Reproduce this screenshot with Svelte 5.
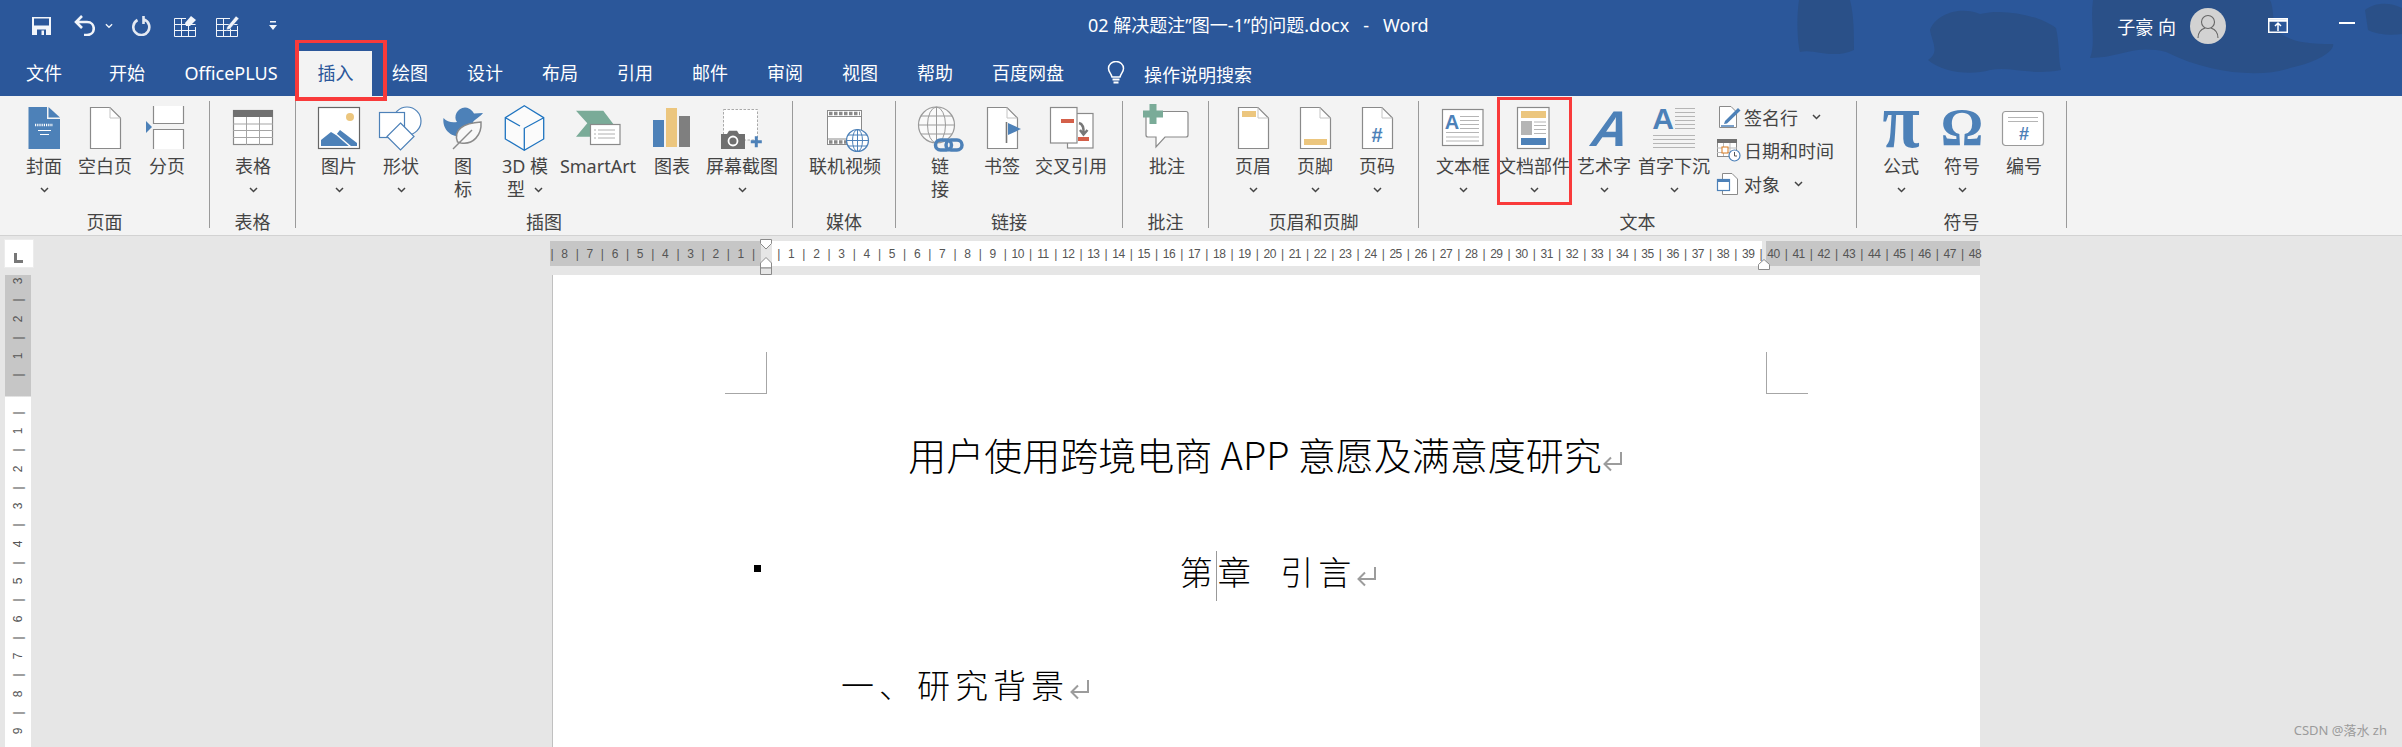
<script>
  const PG = 'M15.5 2.5H35L45.5 13V43.5H15.5Z';
  const FOLD = 'M35 2.5V13H45.5';
  const tabs = [
    ['文件', 88], ['开始', 78], ['OfficePLUS', 130], ['插入', 76, true], ['绘图', 76], ['设计', 74], ['布局', 76],
    ['引用', 74], ['邮件', 76], ['审阅', 74], ['视图', 76], ['帮助', 74], ['百度网盘', 112]
  ].map(([t, w, on]) => ({ t, w, on }));

  const groups = [
    { label: '页面', w: 210, pad: 14, tools: [
      { w: 60, lines: ['封面'], chev: true, icon: cover },
      { w: 62, lines: ['空白页'], icon: blank },
      { w: 62, lines: ['分页'], icon: pagebreak } ] },
    { label: '表格', w: 86, pad: 11, tools: [
      { w: 64, lines: ['表格'], chev: true, icon: table } ] },
    { label: '插图', w: 497, pad: 12, tools: [
      { w: 62, lines: ['图片'], chev: true, icon: picture },
      { w: 62, lines: ['形状'], chev: true, icon: shapes },
      { w: 62, lines: ['图', '标'], icon: icons },
      { w: 62, lines: ['3D 模', '型'], inlineChev: true, icon: model },
      { w: 84, lines: ['SmartArt'], icon: smartart },
      { w: 64, lines: ['图表'], icon: chart },
      { w: 76, lines: ['屏幕截图'], chev: true, icon: screenshot } ] },
    { label: '媒体', w: 103, pad: 7, tools: [
      { w: 90, lines: ['联机视频'], icon: video } ] },
    { label: '链接', w: 227, pad: 14, tools: [
      { w: 60, lines: ['链', '接'], icon: link },
      { w: 64, lines: ['书签'], icon: bookmark },
      { w: 74, lines: ['交叉引用'], icon: crossref } ] },
    { label: '批注', w: 86, pad: 10, tools: [
      { w: 68, lines: ['批注'], icon: comment } ] },
    { label: '页眉和页脚', w: 210, pad: 13, tools: [
      { w: 62, lines: ['页眉'], chev: true, icon: header },
      { w: 62, lines: ['页脚'], chev: true, icon: footer },
      { w: 62, lines: ['页码'], chev: true, icon: pagenum } ] },
    { label: '文本', w: 438, pad: 9, small: true, tools: [
      { w: 70, lines: ['文本框'], chev: true, icon: textbox },
      { w: 72, lines: ['文档部件'], chev: true, icon: parts, mark: true },
      { w: 68, lines: ['艺术字'], chev: true, icon: wordart },
      { w: 72, lines: ['首字下沉'], chev: true, icon: dropcap } ] },
    { label: '符号', w: 210, pad: 13, tools: [
      { w: 62, lines: ['公式'], chev: true, icon: pi },
      { w: 60, lines: ['符号'], chev: true, icon: omega },
      { w: 64, lines: ['编号'], icon: numbering } ] }
  ];

  const smallTools = [
    { t: '签名行', chev: true, icon: sign },
    { t: '日期和时间', icon: date },
    { t: '对象', chev: true, icon: object }
  ];

  const hticks = [];
  for (let n = -8.5; n <= 48; n += 0.5) {
    hticks.push(n === 0 ? '' : Number.isInteger(n) ? String(Math.abs(n)) : '|');
  }
  const vticks = [];
  for (let n = -3; n <= 9; n += 0.5) {
    vticks.push(n === 0 ? '' : Number.isInteger(n) ? String(Math.abs(n)) : '|');
  }
</script>

{#snippet chevron()}
  <svg class="chev" width="9" height="6" viewBox="0 0 9 6"><path d="M1 1l3.5 3.5L8 1" fill="none" stroke="#444" stroke-width="1.5" /></svg>
{/snippet}

{#snippet ret()}
  <svg class="ret" width="23" height="24" viewBox="0 0 23 24"><path d="M19 3V15H3M9 8.500L2.500 15L9 21.500" fill="none" stroke="#9c9c9c" stroke-width="2" /></svg>
{/snippet}

{#snippet cover()}
  <svg class="ic" viewBox="0 0 60 46"><path d="M14.500 2H33V14H46V44H14.500Z" fill="#4d81b8" /><path d="M34.500 2L46 12.500H34.500Z" fill="#4d81b8" /><path d="M21 20H39" stroke="#fff" stroke-width="2.500" stroke-dasharray="1.200 1" /><path d="M24 25.500H37M26 29.500H35" stroke="#fff" stroke-width="1.200" /></svg>
{/snippet}
{#snippet blank()}
  <svg class="ic" viewBox="0 0 60 46"><path d={PG} fill="#fff" stroke="#8a8a8a" stroke-width="1.200" /><path d={FOLD} fill="none" stroke="#c4c4c4" /></svg>
{/snippet}
{#snippet pagebreak()}
  <svg class="ic" viewBox="0 0 60 46"><path d="M16 1H47V18.500H16Z" fill="#fff" /><path d="M16.500 1V18.500H46.500V1" fill="none" stroke="#8a8a8a" stroke-width="1.200" /><path d="M16 24H47V44H16Z" fill="#fff" /><path d="M16.500 44V24.500H46.500V44" fill="none" stroke="#8a8a8a" stroke-width="1.200" /><path d="M9 16L15 22L9 28Z" fill="#4d81b8" /></svg>
{/snippet}
{#snippet table()}
  <svg class="ic" viewBox="0 0 60 46"><rect x="10.500" y="5.500" width="39" height="34" fill="#fff" stroke="#8a8a8a" stroke-width="1.200" /><rect x="10" y="5" width="40" height="7" fill="#707070" /><path d="M10 19H50M10 25.500H50M10 32.500H50M23.500 12V40M36.500 12V40" stroke="#a5a5a5" /></svg>
{/snippet}
{#snippet picture()}
  <svg class="ic" viewBox="0 0 60 46"><rect x="9.500" y="2.500" width="41" height="41" fill="#fff" stroke="#666" stroke-width="1.200" /><circle cx="41" cy="12" r="4" fill="#ecc67e" /><path d="M12 41V35L22 27L27 30L31 25L48 38V41Z" fill="#4d81b8" /><path d="M27 29L42 42" stroke="#fff" stroke-width="1.500" /></svg>
{/snippet}
{#snippet shapes()}
  <svg class="ic" viewBox="0 0 60 46"><circle cx="36" cy="16" r="14" fill="#fff" stroke="#4d81b8" stroke-width="1.200" /><rect x="8.500" y="7.500" width="25" height="25" fill="#fff" stroke="#4d81b8" stroke-width="1.200" /><path d="M29.500 18L43 31.500L29.500 45L16 31.500Z" fill="#fff" stroke="#4d81b8" stroke-width="1.200" /></svg>
{/snippet}
{#snippet icons()}
  <svg class="ic" viewBox="0 0 60 46"><path d="M10.500 13C14 17 19 18 24 17C20 12 24 3 32 2.500C38 3 40 7 41 8.500L50 8C47 12 42 14 40 17L40 21L26 31C18 32 9 24 10.500 13Z" fill="#4d81b8" /><path d="M24.500 37C20 25 30 18 48 17C49 30 40 40 28 38Z" fill="#f8f8f8" stroke="#8a8a8a" stroke-width="1.500" /><path d="M20 44L39 25" stroke="#8a8a8a" stroke-width="1.500" /></svg>
{/snippet}
{#snippet model()}
  <svg class="ic" viewBox="0 0 60 46"><path d="M29.300 .7L48.700 12.700V34L29.300 45.300L10.300 34V12.700Z" fill="#fbfbfb" stroke="#1f74c0" stroke-width="1.300" /><path d="M10.300 12.700L25 21M48.700 12.700L29.300 23.300V45.300" fill="none" stroke="#1f74c0" stroke-width="1.300" /></svg>
{/snippet}
{#snippet smartart()}
  <svg class="ic" viewBox="0 0 60 46"><path d="M8 5.700H35.300L45.300 19H24V31.700H8L19.300 18.300Z" fill="#7aab98" /><rect x="22.500" y="19.500" width="29.500" height="20" fill="#fff" stroke="#8a8a8a" stroke-width="1.200" /><path d="M26 25H28M30 25H47M26 29H28M30 29H47M26 33H28M30 33H47" stroke="#b0b0b0" /></svg>
{/snippet}
{#snippet chart()}
  <svg class="ic" viewBox="0 0 60 46"><rect x="11" y="15" width="11" height="27" fill="#4d81b8" /><rect x="24" y="3" width="11" height="39" fill="#ecc67e" /><rect x="37" y="11" width="11" height="31" fill="#7f7f7f" /></svg>
{/snippet}
{#snippet screenshot()}
  <svg class="ic" viewBox="0 0 60 46"><rect x="11.500" y="4.500" width="34" height="30.500" fill="#fff" stroke="#aaa" stroke-dasharray="2.500 1.500" /><path d="M10.500 29H15L17 25.700H25L27 29H33V44H9V29Z" fill="#6f6f6f" /><circle cx="21" cy="36" r="4.500" fill="none" stroke="#fff" stroke-width="1.800" /><path d="M38.800 36.700H49.800M44.300 31.200V42.200" stroke="#4d81b8" stroke-width="3" /></svg>
{/snippet}
{#snippet video()}
  <svg class="ic" viewBox="0 0 60 46"><rect x="12.500" y="5.500" width="34" height="34" fill="#fff" stroke="#8a8a8a" /><path d="M12 11.500H47M12 34H47" stroke="#8a8a8a" /><path d="M14 8.500H45M14 37H35" stroke="#8a8a8a" stroke-width="3.500" stroke-dasharray="3.500 1.500" /><circle cx="42.500" cy="35.500" r="11" fill="#fff" stroke="#4d81b8" stroke-width="1.200" /><ellipse cx="42.500" cy="35.500" rx="5" ry="11" fill="none" stroke="#4d81b8" /><path d="M31.500 35.500H53.500M33 30H52M33 41H52M42.500 24.500V46.500" stroke="#4d81b8" /></svg>
{/snippet}
{#snippet link()}
  <svg class="ic" viewBox="0 0 60 46"><circle cx="26.500" cy="20" r="18" fill="#fafafa" stroke="#9a9a9a" stroke-width="1.200" /><ellipse cx="26.500" cy="20" rx="9" ry="18" fill="none" stroke="#9a9a9a" /><path d="M8.500 20H44.500M11 11H42M11 29H42M26.500 2V38" stroke="#9a9a9a" /><rect x="25.500" y="35" width="16" height="10" rx="5" fill="none" stroke="#4d81b8" stroke-width="3.500" /><rect x="36" y="35" width="16" height="10" rx="5" fill="none" stroke="#4d81b8" stroke-width="3.500" /></svg>
{/snippet}
{#snippet bookmark()}
  <svg class="ic" viewBox="0 0 60 46"><path d={PG} fill="#fff" stroke="#8a8a8a" stroke-width="1.200" /><path d={FOLD} fill="none" stroke="#c4c4c4" /><path d="M34.500 17V38" stroke="#777" stroke-width="1.600" /><path d="M36 18L49 24L36 30Z" fill="#4d81b8" /></svg>
{/snippet}
{#snippet crossref()}
  <svg class="ic" viewBox="0 0 60 46"><rect x="26.500" y="8.500" width="25.500" height="34.500" fill="#fff" stroke="#8a8a8a" stroke-width="1.200" /><rect x="9.500" y="2.500" width="26.500" height="35.500" fill="#fff" stroke="#8a8a8a" stroke-width="1.200" /><rect x="20" y="14" width="13" height="4" fill="#d4604a" /><rect x="37" y="32" width="11" height="4" fill="#d4604a" /><path d="M38 18C42 19 43 23 42.500 29M39 25L42.500 29.500L46.500 25" fill="none" stroke="#777" stroke-width="2.500" /></svg>
{/snippet}
{#snippet comment()}
  <svg class="ic" viewBox="0 0 60 46"><path d="M12 6.500H49Q51 6.500 51 8.500V30Q51 32 49 32H28L19 42V32H11Q9 32 9 30V8.500Q9 6.500 11 6.500Z" fill="#fff" stroke="#8a8a8a" stroke-width="1.200" /><path d="M6 9H26M16 -1V19" stroke="#7aab98" stroke-width="7" /></svg>
{/snippet}
{#snippet header()}
  <svg class="ic" viewBox="0 0 60 46"><path d={PG} fill="#fff" stroke="#8a8a8a" stroke-width="1.200" /><path d={FOLD} fill="none" stroke="#c4c4c4" /><rect x="19" y="6" width="14" height="6" fill="#ecc67e" /></svg>
{/snippet}
{#snippet footer()}
  <svg class="ic" viewBox="0 0 60 46"><path d={PG} fill="#fff" stroke="#8a8a8a" stroke-width="1.200" /><path d={FOLD} fill="none" stroke="#c4c4c4" /><rect x="19" y="34" width="23" height="6" fill="#ecc67e" /></svg>
{/snippet}
{#snippet pagenum()}
  <svg class="ic" viewBox="0 0 60 46"><path d={PG} fill="#fff" stroke="#8a8a8a" stroke-width="1.200" /><path d={FOLD} fill="none" stroke="#c4c4c4" /><text x="30" y="37" class="gl" font-size="20" text-anchor="middle" fill="#4d81b8">#</text></svg>
{/snippet}
{#snippet textbox()}
  <svg class="ic" viewBox="0 0 60 46"><rect x="9.500" y="4.500" width="40.500" height="36" fill="#fff" stroke="#8a8a8a" stroke-width="1.200" /><text x="19" y="23.500" class="gl" font-size="20" text-anchor="middle" fill="#4d81b8">A</text><path d="M27 11.500H46M27 15.500H46M27 19.500H46M27 23.500H46M13 27.500H46M13 32H46M13 36H46" stroke="#b5b5b5" /></svg>
{/snippet}
{#snippet parts()}
  <svg class="ic" viewBox="0 0 60 46"><rect x="13.500" y="2.500" width="31.500" height="41" fill="#fff" stroke="#8a8a8a" stroke-width="1.200" /><rect x="17" y="6" width="25" height="7" fill="#ecc67e" /><rect x="17" y="16" width="11" height="14" fill="#b5b5b5" /><path d="M30 17H42M30 20.500H42M30 24.500H42M30 28.500H42" stroke="#b5b5b5" /><rect x="17" y="33" width="25" height="7" fill="#4d81b8" /></svg>
{/snippet}
{#snippet wordart()}
  <svg class="ic" viewBox="0 0 60 46"><text x="0" y="0" class="gl it" font-size="50" text-anchor="middle" fill="#4d81b8" transform="translate(34 41) skewX(-9)">A</text></svg>
{/snippet}
{#snippet dropcap()}
  <svg class="ic" viewBox="0 0 60 46"><text x="19" y="24" class="gl" font-size="30" text-anchor="middle" fill="#4d81b8">A</text><path d="M31 3.500H51M31 7.500H51M31 11.500H51M31 15.500H51M31 19.500H51M31 23.500H51M9 30.500H51M9 34.500H51M9 38.500H51M9 42.500H51" stroke="#b5b5b5" /></svg>
{/snippet}
{#snippet pi()}
  <svg class="ic" viewBox="0 0 60 46"><text x="0" y="0" class="gl sf" font-size="68" text-anchor="middle" fill="#4d81b8" transform="translate(30 42) scale(1 1.15)">π</text></svg>
{/snippet}
{#snippet omega()}
  <svg class="ic" viewBox="0 0 60 46"><text x="30" y="40" class="gl sf" font-size="53" text-anchor="middle" fill="#4d81b8">Ω</text></svg>
{/snippet}
{#snippet numbering()}
  <svg class="ic" viewBox="0 0 60 46"><rect x="8.500" y="6.500" width="41" height="34" rx="3" fill="#fff" stroke="#9a9a9a" stroke-width="1.200" /><path d="M14 12.500H44M14 16.500H44" stroke="#b5b5b5" /><text x="30" y="35" class="gl" font-size="18" text-anchor="middle" fill="#4d81b8">#</text></svg>
{/snippet}
{#snippet sign()}
  <svg class="sic" viewBox="0 0 26 24"><path d="M3.500 1.500H15L20.500 7V22.500H3.500Z" fill="#fff" stroke="#8a8a8a" /><path d="M9 16L22 3L24.500 5.500L11 18.500L8 19Z" fill="#4d81b8" /><path d="M5 21H18" stroke="#4d81b8" stroke-width="1.500" /></svg>
{/snippet}
{#snippet date()}
  <svg class="sic" viewBox="0 0 26 24"><rect x="1.500" y="1.500" width="19" height="17" fill="#fff" stroke="#8a8a8a" /><rect x="1" y="1" width="20" height="4" fill="#707070" /><path d="M7.500 5V18M14 5V18M1 10H21M1 14.500H21" stroke="#bbb" /><rect x="6" y="9" width="6" height="6" fill="#fff" stroke="#d97a1e" /><circle cx="18.500" cy="17.500" r="5.500" fill="#fff" stroke="#4d81b8" stroke-width="1.200" /><path d="M18.500 14V18H21" fill="none" stroke="#555" /></svg>
{/snippet}
{#snippet object()}
  <svg class="sic" viewBox="0 0 26 24"><path d="M6.500 1.500H16L21.500 7V22.500H6.500Z" fill="#fff" stroke="#8a8a8a" /><rect x="1.500" y="7.500" width="12" height="11" fill="#fff" stroke="#4d81b8" stroke-width="1.200" /><rect x="1" y="7" width="13" height="3" fill="#4d81b8" /></svg>
{/snippet}

<div class="word">
  <header class="top">
    <svg class="clouds" width="612" height="96" viewBox="0 0 612 96">
      <path d="M9 0C6 20 8 45 10 52C24 48 42 60 64 50C64 35 64 15 60 0Z" />
      <path d="M140 30C146 14 170 6 190 14C215 8 250 16 266 28C270 46 268 58 271 70C240 76 222 66 200 70C180 76 152 72 138 60C150 52 142 42 140 30Z" />
      <path d="M303 0C300 20 306 44 300 58C330 58 344 44 376 52C420 74 470 78 500 68C530 62 545 50 543 44C515 44 500 42 486 30C482 18 484 8 480 0Z" />
      <path d="M575 10C585 2 600 2 612 8V34C600 36 585 34 578 30Z" />
    </svg>
    <div class="titlebar">
      <div class="qat">
        <svg class="q" style="margin-left:32px" width="19" height="18" viewBox="0 0 19 18"><path d="M0 0H19V18H0Z" fill="#f2f5fa" /><path d="M2 1.500H17V8.500H2Z" fill="#2b579a" /><path d="M5 12.500H14V18H5Z" fill="#2b579a" /><path d="M9.500 13.500H12V18H9.500Z" fill="#f2f5fa" /></svg>
        <svg class="q" style="margin-left:23px" width="21" height="21" viewBox="0 0 21 21"><path d="M8 1L2 7L8 13M2 7H13C22 7 22 20 13 20H10" fill="none" stroke="#f2f5fa" stroke-width="2.600" /></svg>
        <svg class="q" style="margin-left:10px" width="8" height="6" viewBox="0 0 9 6"><path d="M1 1l3.500 3.500L8 1" fill="none" stroke="#f2f5fa" stroke-width="1.500" /></svg>
        <svg class="q" style="margin-left:19px" width="20" height="20" viewBox="0 0 20 20"><path d="M12 3.500A8 8 0 1 1 5.500 4M11.500 0V8" fill="none" stroke="#e4e9f2" stroke-width="2.600" /></svg>
        <svg class="q" style="margin-left:22px" width="22" height="22" viewBox="0 0 22 22"><path d="M.5 3.500H12M.5 3.500V21.500H21.500V12M.5 9.500H21.500M.5 15.500H21.500M7.500 3.500V21.500M14.500 9.500V21.500" fill="none" stroke="#f2f5fa" /><path d="M11 8L17 1L22 5L16 11H12Z" fill="#f2f5fa" /></svg>
        <svg class="q" style="margin-left:20px" width="24" height="23" viewBox="0 0 24 23"><path d="M.5 4.500H14M.5 4.500V22.500H21.500V12M.5 10.500H21.500M.5 16.500H21.500M7.500 4.500V22.500M14.500 10.500V22.500" fill="none" stroke="#f2f5fa" /><path d="M11 13L20 2L23 4.500L14 15L10.500 16Z" fill="#f2f5fa" stroke="#2b579a" stroke-width=".5" /></svg>
        <svg class="q" style="margin-left:29px" width="8" height="9" viewBox="0 0 8 9"><path d="M1 0H7V1.500H1Z M0 4H8L4 9Z" fill="#f2f5fa" /></svg>
      </div>
      <div class="doc-title">02 解决题注”图一-1”的问题.docx &nbsp;&nbsp;-&nbsp;&nbsp; Word</div>
      <div class="user">
        <span class="uname">子豪 向</span>
        <svg class="avatar" width="36" height="36" viewBox="0 0 36 36"><circle cx="18" cy="18" r="18" fill="#d2d2d2" /><circle cx="18" cy="14" r="6.500" fill="none" stroke="#666" stroke-width="1.100" /><path d="M8 30C8 23 12 21 15 20M28 30C28 23 24 21 21 20" fill="none" stroke="#666" stroke-width="1.100" /></svg>
        <svg class="restore" width="20" height="15" viewBox="0 0 20 15"><rect x=".75" y=".75" width="18.500" height="13.500" fill="none" stroke="#fff" stroke-width="1.500" /><path d="M0 2.500H20" stroke="#fff" stroke-width="2.500" /><path d="M10 13V5M7 8L10 5L13 8" fill="none" stroke="#fff" stroke-width="1.500" /></svg>
        <span class="min"></span>
      </div>
    </div>
    <nav class="tabs">
      {#each tabs as tab}
        <div class="tab" class:on={tab.on} style="width:{tab.w}px">
          {tab.t}
          {#if tab.on}<span class="redbox tabmark"></span>{/if}
        </div>
      {/each}
      <svg class="bulb" width="18" height="24" viewBox="0 0 18 24"><path d="M5 16C4 12 1.500 11 1.500 7.500A7.500 7 0 0 1 16.500 7.500C16.500 11 14 12 13 16Z" fill="none" stroke="#fff" stroke-width="1.500" /><path d="M5.500 18.500H12.500M6.500 21.500H11.500" stroke="#fff" stroke-width="1.800" /></svg>
      <div class="search">操作说明搜索</div>
    </nav>
  </header>

  <section class="ribbon">
    {#each groups as g}
      <div class="group" style="width:{g.w}px">
        <div class="tools" style="padding-left:{g.pad}px">
          {#each g.tools as t}
            <div class="tool" style="width:{t.w}px">
              {@render t.icon()}
              {#each t.lines as line, i}
                <div class="line">
                  {line}{#if t.inlineChev && i === t.lines.length - 1}<span class="inchev">{@render chevron()}</span>{/if}
                </div>
              {/each}
              {#if t.chev}<div class="line">{@render chevron()}</div>{/if}
              {#if t.mark}<span class="redbox toolmark"></span>{/if}
            </div>
          {/each}
          {#if g.small}
            <div class="smallcol">
              {#each smallTools as s}
                <div class="srow">
                  {@render s.icon()}
                  <span>{s.t}</span>
                  {#if s.chev}<span class="schev">{@render chevron()}</span>{/if}
                </div>
              {/each}
            </div>
          {/if}
        </div>
        <div class="glabel">{g.label}</div>
      </div>
    {/each}
  </section>

  <main class="work">
    <aside class="side">
      <div class="tabsel"><span class="ltab"></span></div>
      <div class="vruler">
        {#each vticks as v}<div class="vt"><span>{v}</span></div>{/each}
      </div>
    </aside>
    <div class="center">
      <div class="hruler">
        <div class="hrow">
          {#each hticks as h}<span class="ht">{h}</span>{/each}
        </div>
        <svg class="indent" width="14" height="36" viewBox="0 0 14 36"><path d="M1.500 .5H12.500V4.500L7 10L1.500 4.500Z" fill="#fff" stroke="#8a8a8a" /><path d="M7 18.500L12.500 24V29H1.500V24Z" fill="#fff" stroke="#8a8a8a" /><path d="M1.500 29H12.500V35.500H1.500Z" fill="#e6e6e6" stroke="#8a8a8a" /></svg>
        <svg class="indent-r" width="14" height="11" viewBox="0 0 14 11"><path d="M7 .5L12.500 5.500V10.500H1.500V5.500Z" fill="#fff" stroke="#8a8a8a" /></svg>
      </div>
      <article class="page">
        <span class="crop tl"></span>
        <span class="crop tr"></span>
        <p class="title">用户使用跨境电商 APP 意愿及满意度研究{@render ret()}</p>
        <p class="chapter">
          <span class="bullet"></span>第<span class="caret"></span>章&nbsp;&nbsp;引言{@render ret()}
        </p>
        <p class="heading">一、研究背景{@render ret()}</p>
      </article>
    </div>
    <div class="wm">CSDN @落水 zh</div>
  </main>
</div>

<style>
  :global(body) { margin: 0; background: #e6e6e6; }
  .word { width: 2402px; height: 747px; overflow: hidden; font-family: "Noto Sans", "Noto Sans CJK SC", sans-serif; color: #444; position: relative; }

  .top { height: 96px; background: #2b579a; position: relative; color: #fff; font-size: 18px; }
  .clouds { position: absolute; right: 0; top: 0; fill: #2a5088; }
  .titlebar { height: 51px; display: flex; align-items: center; position: relative; }
  .qat { display: flex; align-items: center; flex: none; }
  .q { flex: none; display: block; }
  .doc-title { margin-left: 811px; margin-top: 25px; align-self: flex-start; line-height: 26px; white-space: nowrap; position: relative; top: -13px; }
  .user { margin-left: auto; display: flex; align-items: center; padding-right: 47px; }
  .uname { margin-right: 14px; }
  .restore { margin-left: 42px; }
  .min { display: block; width: 16px; height: 2px; background: #fff; margin-left: 51px; margin-top: -6px; }

  .tabs { height: 45px; display: flex; align-items: stretch; position: relative; }
  .tab { flex: none; display: flex; align-items: center; justify-content: center; line-height: 45px; white-space: nowrap; position: relative; box-sizing: border-box; }
  .tab.on { background: #f3f3f3; color: #2b579a; width: 73px !important; margin-left: 3px; }
  .bulb { margin-left: 23px; align-self: center; flex: none; margin-top: -2px; }
  .search { margin-left: 19px; align-self: center; white-space: nowrap; }

  .redbox { position: absolute; box-sizing: border-box; border: 3px solid #f93a3a; z-index: 5; pointer-events: none; }
  .tabmark { left: -4px; top: -11px; width: 92px; height: 61px; border-width: 3px 4px 4px 4px; }
  .toolmark { left: -1px; top: -4px; width: 75px; height: 108px; }

  .ribbon { height: 134px; padding-top: 5px; background: #f3f3f3; border-bottom: 1px solid #d2d2d2; display: flex; align-items: flex-start; }
  .group { flex: none; height: 127px; box-sizing: border-box; border-right: 1px solid #9a9a9a; display: flex; flex-direction: column; font-size: 18px; }
  .tools { height: 110px; display: flex; box-sizing: border-box; flex: none; }
  .tool { flex: none; display: flex; flex-direction: column; align-items: center; position: relative; }
  .ic { display: block; width: 60px; height: 46px; margin: 4px 0 4px; overflow: visible; flex: none; }
  .gl { font-family: "Liberation Sans", sans-serif; font-weight: 700; }
  .it { font-style: italic; }
  .sf { font-family: "Liberation Serif", serif; }
  .line { height: 23px; line-height: 23px; white-space: nowrap; display: flex; align-items: center; justify-content: center; }
  .chev { display: block; }
  .inchev { margin-left: 9px; }
  .glabel { height: 22px; line-height: 22px; text-align: center; white-space: nowrap; flex: none; }

  .smallcol { margin-left: 6px; margin-top: -1px; display: flex; flex-direction: column; }
  .srow { height: 33.500px; display: flex; align-items: center; white-space: nowrap; }
  .sic { width: 26px; height: 24px; flex: none; margin-right: 2px; }
  .schev { margin-left: 14px; }

  .work { height: 511px; display: flex; background: #e6e6e6; position: relative; overflow: hidden; }
  .side { width: 552px; flex: none; }
  .tabsel { box-sizing: border-box; margin: 3px 0 0 4px; width: 30px; height: 29px; background: #fff; border: 1px solid #ececec; position: relative; }
  .ltab { position: absolute; left: 9px; top: 13px; width: 9px; height: 10px; border-left: 3px solid #777; border-bottom: 3px solid #777; box-sizing: border-box; }
  .vruler { margin: 7px 0 0 5px; width: 26px; height: 480px; overflow: hidden; background: linear-gradient(180deg, #c6c6c6 0 121px, #fff 122px); }
  .vt { height: 18.75px; display: flex; align-items: center; justify-content: center; position: relative; top: -3px; font-size: 12px; line-height: 1; font-family: "Liberation Sans", sans-serif; color: #555; }
  .vt span { display: block; transform: rotate(-90deg); }

  .center { width: 1428px; flex: none; }
  .hruler { margin: 5px 0 0 -2px; width: 1430px; height: 25px; position: relative; background: linear-gradient(90deg, #c6c6c6 0 211px, #e6e6e6 211px 222px, #fff 222px 1212px, #e6e6e6 1212px 1216px, #c6c6c6 1216px); }
  .hrow { display: flex; margin-left: -4.500px; height: 25px; align-items: center; font-family: "Liberation Sans", sans-serif; font-size: 12px; color: #555; overflow: visible; }
  .ht { flex: none; width: 12.600px; text-align: center; white-space: nowrap; display: flex; justify-content: center; letter-spacing: -.5px; }
  .indent { position: absolute; left: 209px; top: -2px; }
  .indent-r { position: absolute; left: 1207px; top: 18px; }

  .page { margin-top: 9px; height: 480px; display: flow-root; background: #fff; border-left: 1px solid #c0c0c0; position: relative; color: #000; font-family: "Noto Sans CJK SC", "Noto Sans", sans-serif; font-weight: 300; }
  .page p { margin: 0; height: 60px; line-height: 60px; white-space: nowrap; position: relative; }
  .page .title { margin-top: 149px; font-size: 38px; text-align: center; }
  .page .chapter { margin-top: 57px; font-size: 33px; text-align: center; letter-spacing: 5px; padding-left: 26px; }
  .page .heading { margin-top: 53px; margin-left: 288px; font-size: 33px; letter-spacing: 5px; }
  .ret { vertical-align: -3px; }
  .bullet { position: absolute; left: 201px; top: 24px; width: 7px; height: 7px; background: #000; }
  .caret { display: inline-block; width: 1px; height: 50px; background: #999; vertical-align: middle; margin-left: -2px; margin-right: 1px; }
  .crop { position: absolute; top: 77px; width: 42px; height: 42px; box-sizing: border-box; border-bottom: 1px solid #a6a6a6; }
  .crop.tl { left: 172px; border-right: 1px solid #a6a6a6; }
  .crop.tr { left: 1213px; border-left: 1px solid #a6a6a6; }

  .wm { position: absolute; right: 15px; bottom: 8px; font-size: 13px; color: #9b9b9b; white-space: nowrap; }
</style>
